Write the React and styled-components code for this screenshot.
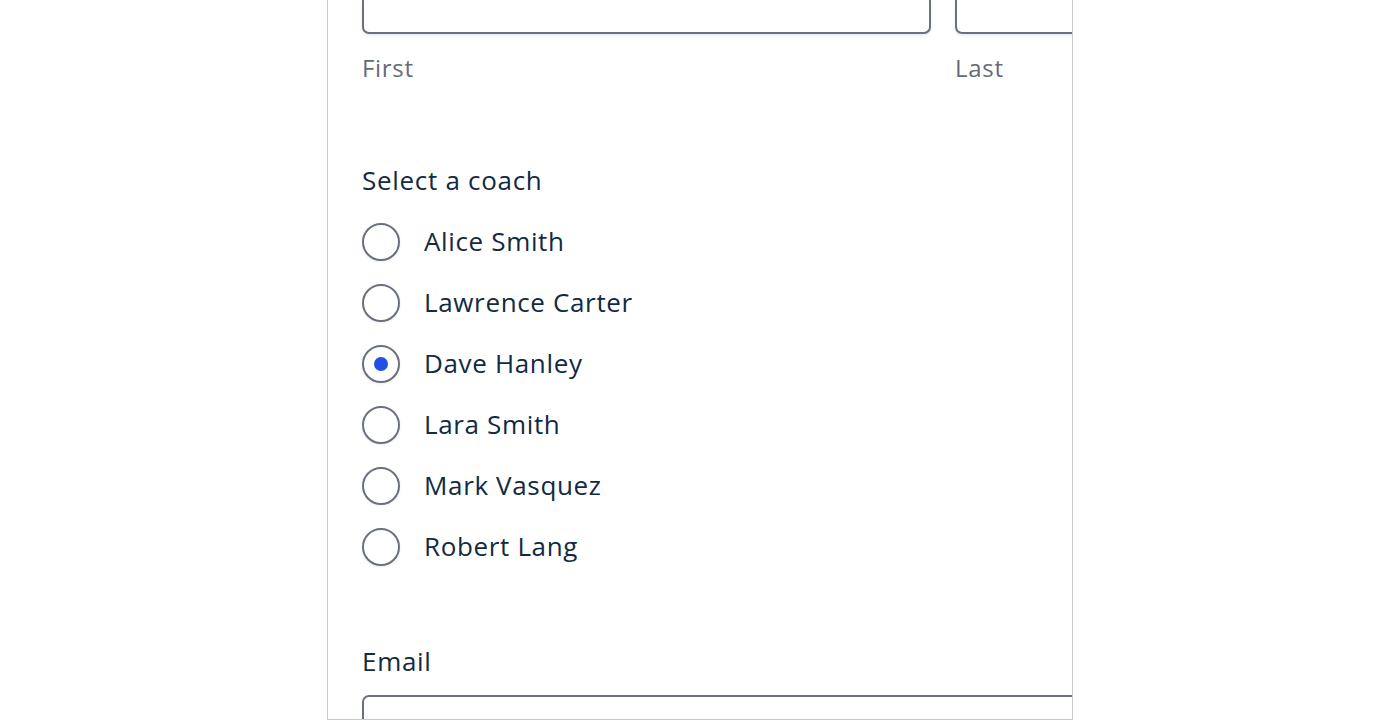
import React, { useState } from 'react'
import styled, { createGlobalStyle } from 'styled-components'

const GlobalStyle = createGlobalStyle`
  html, body {
    margin: 0;
    padding: 0;
    background: #ffffff;
  }
  body {
    font-family: "Open Sans", "Noto Sans", Arial, sans-serif;
  }
`

const Page = styled.div`
  display: flex;
  justify-content: center;
  height: 720px;
`

const Panel = styled.div`
  width: 710px;
  height: 719px;
  border: 1px solid #c9c9cc;
  border-top: none;
  overflow: hidden;
  padding-left: 34px;
  box-sizing: content-box;
`

const Inner = styled.div`
  width: 1200px;
`

const NameRow = styled.div`
  display: flex;
  gap: 24px;
`

const NameField = styled.div`
  display: flex;
  flex-direction: column;
  width: 569px;
`

const CutInput = styled.div`
  height: 32px;
  border: 2px solid #6b7080;
  border-top: none;
  border-radius: 0 0 7px 7px;
  box-shadow: 0 2px 3px rgba(0, 0, 0, 0.08);
  background: #fff;
`

const Hint = styled.span`
  margin-top: 18px;
  font-size: 24px;
  line-height: 32px;
  letter-spacing: 0.7px;
  color: #646b78;
`

const Fieldset = styled.fieldset`
  border: none;
  margin: 79px 0 0;
  padding: 0;
`

const Legend = styled.legend`
  padding: 0;
  font-size: 26px;
  line-height: 34px;
  letter-spacing: 0.7px;
  color: #122a42;
`

const Options = styled.div`
  display: flex;
  flex-direction: column;
  gap: 23px;
  margin-top: 26px;
`

const Option = styled.label`
  display: flex;
  align-items: center;
  gap: 24px;
  height: 38px;
  font-size: 26px;
  letter-spacing: 0.65px;
  color: #122a42;
  cursor: pointer;
`

const OptionText = styled.span`
  margin-bottom: 2px;
`

const Radio = styled.span`
  width: 38px;
  height: 38px;
  box-sizing: border-box;
  border-radius: 50%;
  border: 2px solid #6b7080;
  background: #fff;
  box-shadow: 0 1px 3px rgba(0, 0, 0, 0.08);
  display: flex;
  align-items: center;
  justify-content: center;
  flex-shrink: 0;

  &::after {
    content: '';
    width: 14px;
    height: 14px;
    border-radius: 50%;
    background: ${(p) => (p.checked ? '#2250e4' : 'transparent')};
  }
`

const EmailLabel = styled.div`
  margin-top: 78px;
  font-size: 26px;
  line-height: 34px;
  letter-spacing: 0.7px;
  color: #122a42;
`

const EmailInput = styled.div`
  margin-top: 17px;
  height: 60px;
  border: 2px solid #6b7080;
  border-radius: 7px;
  background: #fff;
`

const coaches = ['Alice Smith', 'Lawrence Carter', 'Dave Hanley', 'Lara Smith', 'Mark Vasquez', 'Robert Lang']

export default function App() {
  const [coach, setCoach] = useState('Dave Hanley')

  return (
    <Page>
      <GlobalStyle />
      <Panel>
        <Inner>
          <NameRow>
            <NameField>
              <CutInput />
              <Hint>First</Hint>
            </NameField>
            <NameField>
              <CutInput />
              <Hint>Last</Hint>
            </NameField>
          </NameRow>

          <Fieldset>
            <Legend>Select a coach</Legend>
            <Options>
              {coaches.map((name) => (
                <Option key={name} onClick={() => setCoach(name)}>
                  <Radio checked={coach === name} />
                  <OptionText>{name}</OptionText>
                </Option>
              ))}
            </Options>
          </Fieldset>

          <EmailLabel>Email</EmailLabel>
          <EmailInput />
        </Inner>
      </Panel>
    </Page>
  )
}
